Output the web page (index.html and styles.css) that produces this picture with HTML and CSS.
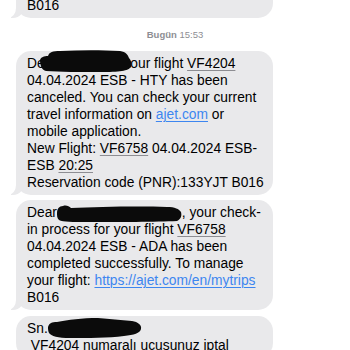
FILE: index.html
```html
<!DOCTYPE html>
<html lang="tr">
<head>
<meta charset="utf-8">
<link rel="stylesheet" href="styles.css">
</head>
<body>
<div class="chat">
  <div class="bubble tail">
    <span class="ln">Reservation code (PNR):133YJT</span>
    <span class="ln">B016</span>
  </div>

  <div class="stamp"><b>Bugün</b> 15:53</div>

  <div class="bubble tail">
    <span class="ln">Dea<span class="redact r1"><svg width="92" height="23" viewBox="0 0 92 23"><path d="M0 10 C1 7 4 6 8 6 C9 2 13 1 20 1 C40 0 62 0 80 1 C86 2 88 5 89 8 C91 10 92 13 91 17 C88 21 80 22 60 22 C40 22 20 22 6 21 C2 20 0 16 0 10 Z" fill="#0b0b0b"/></svg></span>our flight <u class="dd">VF4204</u></span>
    <span class="ln">04.04.2024 ESB - HTY has been</span>
    <span class="ln">canceled. You can check your current</span>
    <span class="ln">travel information on <a class="lnk">ajet.com</a> or</span>
    <span class="ln">mobile application.</span>
    <span class="ln">New Flight: <u class="dd">VF6758</u> 04.04.2024 ESB-</span>
    <span class="ln">ESB <u class="dd">20:25</u></span>
    <span class="ln">Reservation code (PNR):133YJT B016</span>
  </div>

  <div class="bubble tail">
    <span class="ln">Dear <span class="redact r2"><svg width="125" height="18" viewBox="0 0 125 18"><path d="M0 8 C0 4 2 1 6 1 C9 0 12 1 14 3 C40 2 80 1 110 2 C118 2 122 4 124 7 C125 11 124 14 120 16 C100 17 60 17 30 17 C16 17 6 17 2 15 C0 13 0 11 0 8 Z" fill="#0b0b0b"/></svg></span>, your check-</span>
    <span class="ln">in process for your flight <u class="dd">VF6758</u></span>
    <span class="ln">04.04.2024 ESB - ADA has been</span>
    <span class="ln">completed successfully. To manage</span>
    <span class="ln">your flight: <a class="lnk">https://ajet.com/en/mytrips</a></span>
    <span class="ln">B016</span>
  </div>

  <div class="bubble">
    <span class="ln">Sn.<span class="redact r3"><svg width="94" height="21" viewBox="0 0 94 21"><path d="M0 9 C1 5 4 4 9 4 C20 2 34 0 50 0 C62 1 72 2 84 3 C90 4 94 7 93 11 C92 15 86 17 76 18 C60 20 40 20 22 20 C10 20 3 18 1 15 C0 13 0 11 0 9 Z" fill="#0b0b0b"/></svg></span></span>
    <span class="ln">&nbsp;<u class="dd">VF4204</u> numaralı uçuşunuz iptal</span>
  </div>
</div>
</body>
</html>
```
FILE: styles.css
```css
html, body {
  margin: 0;
  padding: 0;
  background: #ffffff;
}
body {
  width: 350px;
  height: 350px;
  overflow: hidden;
  font-family: "Liberation Sans", Arial, sans-serif;
  color: #000;
}
.chat {
  display: flex;
  flex-direction: column;
  align-items: flex-start;
  gap: 5.5px;
  padding-left: 16px;
  margin-top: -24.5px;
}
.bubble {
  position: relative;
  width: 257px;
  box-sizing: border-box;
  background: #e9e9eb;
  border-radius: 15px;
  padding: 4px 11px 4px;
  font-size: 13.8px;
  line-height: 17px;
}
.bubble.tail::before {
  content: "";
  position: absolute;
  left: -5px;
  bottom: 0;
  width: 14px;
  height: 16px;
  background: #e9e9eb;
  border-bottom-right-radius: 12px 14px;
}
.bubble.tail::after {
  content: "";
  position: absolute;
  left: -10px;
  bottom: 0;
  width: 10px;
  height: 18px;
  background: #ffffff;
  border-bottom-right-radius: 8px 10px;
}
.ln {
  display: block;
  white-space: nowrap;
  height: 17px;
}
.stamp {
  align-self: center;
  margin: 6px 0 4px -16px;
  font-size: 9.5px;
  line-height: 12px;
  color: #8e8e93;
}
.stamp b {
  font-weight: 600;
}
.dd {
  text-decoration: underline;
  text-decoration-color: #8d8d92;
  text-decoration-thickness: 1px;
  text-underline-offset: 2px;
}
.lnk {
  color: #3d86f0;
  text-decoration: underline;
  text-decoration-thickness: 1px;
  text-underline-offset: 2px;
}
.redact {
  position: relative;
  display: inline-block;
  vertical-align: top;
  height: 17px;
}
.redact svg {
  position: absolute;
  left: 0;
}
.r1 { width: 90px; margin-left: -12px; }
.r1 svg { top: -5px; }
.r2 { width: 125px; margin-left: -4px; }
.r2 svg { top: 1px; }
.r3 { width: 94px; margin-left: 0; }
.r3 svg { top: -2px; }
```
